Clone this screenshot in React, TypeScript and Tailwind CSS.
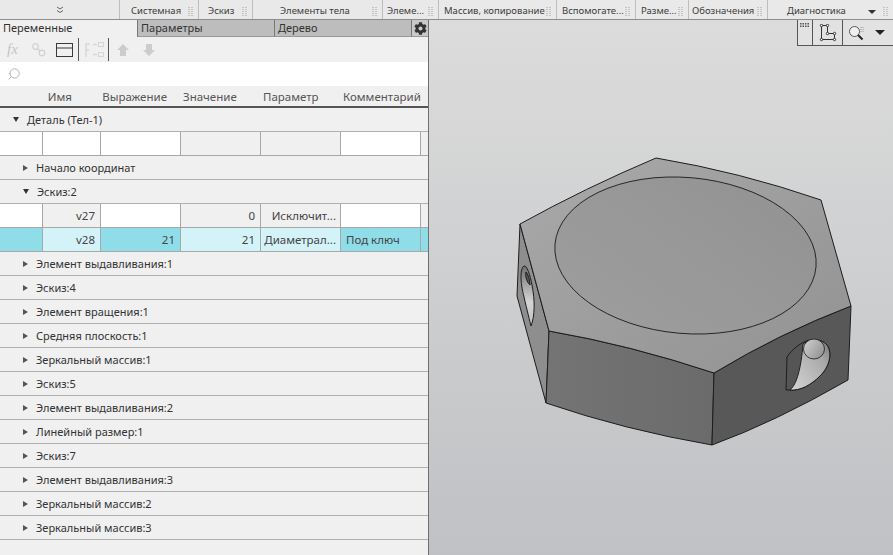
import { Search } from "lucide-react";
import { FaCog } from "react-icons/fa";

function Grip() {
  return (
    <svg width="6" height="10" viewBox="0 0 6 10" className="shrink-0">
      {[0, 2, 4, 6, 8].map((y) => (
        <g key={y}>
          <rect x="0.5" y={y} width="1" height="1" fill="#a0a0a0" />
          <rect x="3.5" y={y} width="1" height="1" fill="#a0a0a0" />
        </g>
      ))}
    </svg>
  );
}

const sections = [
  { label: "Системная", w: "w-[79px]", pl: "pl-[11px]" },
  { label: "Эскиз", w: "w-[54px]", pl: "pl-[9px]" },
  { label: "Элементы тела", w: "w-[130px]", pl: "pl-[27px]" },
  { label: "Элеме...", w: "w-[56px]", pl: "pl-[4px]" },
  { label: "Массив, копирование", w: "w-[118px]", pl: "pl-[5px]" },
  { label: "Вспомогате...", w: "w-[79px]", pl: "pl-[5px]" },
  { label: "Разме...", w: "w-[53px]", pl: "pl-[5px]" },
  { label: "Обозначения", w: "w-[79px]", pl: "pl-[3px]" },
];

function TopBar() {
  return (
    <div className="flex h-[20px] items-center bg-[#e9e9e9] border-b border-[#8e8e8e] text-[9.5px] text-[#3c3c3c] shrink-0">
      <div className="w-[120px] h-full flex items-center justify-center border-r border-[#bdbdbd]">
        <svg width="8" height="8" viewBox="0 0 8 8" fill="none" stroke="#666" strokeWidth="1">
          <path d="M1 1 L4 3 L7 1 M1 4.5 L4 6.5 L7 4.5" />
        </svg>
      </div>
      {sections.map((s) => (
        <div key={s.label} className={`${s.w} ${s.pl} h-full flex items-center justify-between pt-[4px] pr-[4px] border-r border-[#bdbdbd] whitespace-nowrap`}>
          <span>{s.label}</span>
          <Grip />
        </div>
      ))}
      <div className="flex-1 h-full flex items-center pt-[4px] pl-[19px] pr-[4px] justify-between">
        <span>Диагностика</span>
        <span className="flex items-center gap-[7px]">
          <span className="w-0 h-0 border-x-[4px] border-x-transparent border-t-[4px] border-t-[#333]" />
          <Grip />
        </span>
      </div>
    </div>
  );
}

function Tabs() {
  return (
    <div className="flex h-[17px] text-[11px] leading-[16px] text-[#333] shrink-0">
      <div className="w-[137px] pl-[3px] bg-[#f0f0f0]">Переменные</div>
      <div className="w-[137px] pl-[3px] bg-[#bdbdbd] border-l border-[#777] border-b border-b-[#999]">Параметры</div>
      <div className="w-[137px] pl-[3px] bg-[#bdbdbd] border-l border-[#777] border-b border-b-[#999]">Дерево</div>
      <div className="flex-1 bg-[#c9c9c9] border-l border-[#777] border-b border-b-[#999] flex items-center justify-center">
        <FaCog size={13} color="#333" />
      </div>
    </div>
  );
}

function IconBar() {
  return (
    <div className="flex items-center h-[25px] bg-[#f0f0f0] shrink-0 relative">
      <span className="w-[20px] ml-[7px] text-[15px] italic text-[#c4c4c4] leading-none [font-family:'Liberation_Serif',serif]">fx</span>
      <svg width="16" height="16" viewBox="0 0 16 16" fill="none" stroke="#d0d0d0" strokeWidth="1.2" className="ml-[4px]">
        <circle cx="4.5" cy="4.5" r="2.8" />
        <circle cx="11" cy="11" r="2.8" />
        <path d="M6.5 6.5 L9 9" />
      </svg>
      <svg width="17" height="14" viewBox="0 0 17 14" fill="none" stroke="#3a3a3a" strokeWidth="1" className="ml-[9px]">
        <rect x="0.5" y="0.5" width="16" height="13" />
        <path d="M0.5 5 H16.5" />
      </svg>
      <div className="w-px h-[23px] bg-[#555] ml-[5px]" />
      <svg width="22" height="18" viewBox="0 0 22 18" fill="none" stroke="#d6d6d6" strokeWidth="1" className="ml-[5px]">
        <rect x="14.5" y="1.5" width="5" height="4" />
        <rect x="14.5" y="11.5" width="5" height="4" />
        <path d="M1.5 3 H6 M2 3 V16 M2 9 H5 M9 3.5 H13 M9 13.5 H13" strokeWidth="1.4" />
      </svg>
      <div className="w-px h-[23px] bg-[#555] ml-[2px]" />
      <svg width="14" height="14" viewBox="0 0 14 14" fill="#cccccc" className="ml-[7px]">
        <path d="M7 1 L13 7 H10 V13 H4 V7 H1 Z" />
      </svg>
      <svg width="14" height="14" viewBox="0 0 14 14" fill="#cccccc" className="ml-[12px]">
        <path d="M7 13 L13 7 H10 V1 H4 V7 H1 Z" />
      </svg>
    </div>
  );
}

function SearchBar() {
  return (
    <div className="h-[24px] bg-white flex items-center pl-[7px] shrink-0">
      <Search size={14} color="#aaa" strokeWidth={1.5} className="-scale-x-100" />
    </div>
  );
}

function Header() {
  const cols = [
    ["w-[100px] pr-[28px] text-right", "Имя"],
    ["w-[67px] text-right", "Выражение"],
    ["w-[76px] pl-[16px] text-left", "Значение"],
    ["w-[80px] pl-[20px] text-left", "Параметр"],
    ["w-[100px] pl-[20px] text-left", "Комментарий"],
  ];
  return (
    <div className="h-[22px] flex items-center pt-[2px] border-b-2 border-[#555] text-[11.5px] text-[#555] bg-[#f0f0f0] shrink-0 whitespace-nowrap">
      {cols.map(([c, t]) => (
        <div key={t} className={c}>{t}</div>
      ))}
    </div>
  );
}

function TreeRow({ label, open, indent = "pl-[23px]" }: { label: string; open?: boolean; indent?: string }) {
  return (
    <div className={`h-[24px] flex items-center ${indent} bg-[#f0f0f0] border-b border-[#b0b0b0] text-[11px] text-[#333] shrink-0`}>
      {open ? (
        <span className="w-0 h-0 border-x-[3px] border-x-transparent border-t-[5px] border-t-[#333] mr-[8px]" />
      ) : (
        <span className="w-0 h-0 border-y-[3px] border-y-transparent border-l-[5px] border-l-[#555] mr-[8px]" />
      )}
      <span className="pt-[2px]">{label}</span>
    </div>
  );
}

type Cell = { t?: string; bg: string; cls?: string };
function GridRow({ cells }: { cells: Cell[] }) {
  const ws = ["w-[43px]", "w-[58px]", "w-[80px]", "w-[80px]", "w-[80px]", "w-[80px]", "flex-1"];
  return (
    <div className="h-[24px] flex border-b border-[#a8a8a8] text-[11.5px] text-[#444] shrink-0">
      {cells.map((c, i) => (
        <div key={i} className={`${ws[i]} ${c.bg} ${c.cls ?? ""} ${i < 6 ? "border-r border-[#a8a8a8]" : ""} h-full flex items-center pt-[1px] whitespace-nowrap overflow-hidden`}>
          {c.t}
        </div>
      ))}
    </div>
  );
}

const tail = [
  "Элемент выдавливания:1",
  "Эскиз:4",
  "Элемент вращения:1",
  "Средняя плоскость:1",
  "Зеркальный массив:1",
  "Эскиз:5",
  "Элемент выдавливания:2",
  "Линейный размер:1",
  "Эскиз:7",
  "Элемент выдавливания:3",
  "Зеркальный массив:2",
  "Зеркальный массив:3",
];

function Panel() {
  return (
    <div className="w-[429px] shrink-0 h-full bg-[#f0f0f0] border-r border-[#6e6e6e] flex flex-col overflow-hidden">
      <Tabs />
      <IconBar />
      <SearchBar />
      <Header />
      <TreeRow label="Деталь (Тел-1)" open indent="pl-[13px]" />
      <GridRow cells={[{ bg: "bg-white" }, { bg: "bg-white" }, { bg: "bg-white" }, { bg: "bg-[#f0f0f0]" }, { bg: "bg-[#f0f0f0]" }, { bg: "bg-white" }, { bg: "bg-[#f0f0f0]" }]} />
      <TreeRow label="Начало координат" />
      <TreeRow label="Эскиз:2" open />
      <GridRow
        cells={[
          { bg: "bg-white" },
          { bg: "bg-[#f0f0f0]", t: "v27", cls: "justify-end pr-[5px]" },
          { bg: "bg-white" },
          { bg: "bg-[#f0f0f0]", t: "0", cls: "justify-end pr-[5px]" },
          { bg: "bg-[#f0f0f0]", t: "Исключит...", cls: "justify-end pr-[4px]" },
          { bg: "bg-white" },
          { bg: "bg-[#f0f0f0]" },
        ]}
      />
      <GridRow
        cells={[
          { bg: "bg-[#8fdde8]" },
          { bg: "bg-[#d4f3f9]", t: "v28", cls: "justify-end pr-[5px]" },
          { bg: "bg-[#8fdde8]", t: "21", cls: "justify-end pr-[5px]" },
          { bg: "bg-[#d4f3f9]", t: "21", cls: "justify-end pr-[5px]" },
          { bg: "bg-[#d4f3f9]", t: "Диаметрал...", cls: "justify-end pr-[4px]" },
          { bg: "bg-[#8fdde8]", t: "Под ключ", cls: "pl-[5px]" },
          { bg: "bg-[#8fdde8]" },
        ]}
      />
      {tail.map((t, i) => (
        <TreeRow key={i} label={t} />
      ))}
    </div>
  );
}

function Part() {
  return (
    <svg viewBox="0 0 464 535" width="464" height="535" className="block">
      <defs>
        <linearGradient id="top" x1="0" y1="0" x2="1" y2="1">
          <stop offset="0" stopColor="#a9a9a9" />
          <stop offset="1" stopColor="#929292" />
        </linearGradient>
        <linearGradient id="disc" x1="0" y1="1" x2="1" y2="0">
          <stop offset="0" stopColor="#9e9e9e" />
          <stop offset="1" stopColor="#929292" />
        </linearGradient>
        <linearGradient id="front" x1="0" y1="0" x2="1" y2="0">
          <stop offset="0" stopColor="#747474" />
          <stop offset="1" stopColor="#6b6b6b" />
        </linearGradient>
        <linearGradient id="crescent" x1="0" y1="1" x2="1" y2="0">
          <stop offset="0" stopColor="#d5d5d5" />
          <stop offset="0.7" stopColor="#aaa" />
          <stop offset="1" stopColor="#777" />
        </linearGradient>
        <linearGradient id="bore" x1="0" y1="0" x2="1" y2="0.6">
          <stop offset="0" stopColor="#d2d2d2" />
          <stop offset="1" stopColor="#969696" />
        </linearGradient>
        <linearGradient id="lhole" x1="0" y1="0" x2="0" y2="1">
          <stop offset="0" stopColor="#6e6e6e" />
          <stop offset="0.6" stopColor="#d4d4d4" />
          <stop offset="1" stopColor="#c0c0c0" />
        </linearGradient>
      </defs>
      <g transform="translate(-429 -20)" stroke="#1d1d1d" strokeWidth="1" strokeLinejoin="round">
        <path d="M520 224 L549 331 L546 403 L517 296 Z" fill="#8e8e8e" />
        <path d="M549 331 Q630 345 714 373 L712 445 Q625 430 546 403 Z" fill="url(#front)" />
        <path d="M714 373 Q780 333 851 306 L848 380 Q775 422 712 445 Z" fill="#585858" />
        <path d="M520 224 Q585 188 656 158 Q740 172 821 200 L851 306 Q780 333 714 373 Q630 345 549 331 Z" fill="url(#top)" />
        <ellipse cx="685.5" cy="255.5" rx="131" ry="78" transform="rotate(5 685.5 255.5)" fill="url(#disc)" strokeWidth="0.9" />
        {/* left hole */}
        <path d="M524 266 C520 268 520 282 524 297 C527 310 530 322 531 326 C535 316 535 300 532 285 C530 275 527 265 524 266 Z" fill="url(#lhole)" />
        <path d="M526 272 C525 277 527 282 530 285 C530 280 528 274 526 272 Z" fill="#555" />
        {/* right hole */}
        <path d="M787 357 C792 349 800 344 804 342 C811 338 822 339 827 345 C833 354 829 367 820 376 C811 385 800 391 790 390 L786 390 Z" fill="#555" />
        <path d="M803 344 C811 338 822 339 827 345 C833 354 829 367 820 376 C811 385 800 391 790 390 C797 384 801 368 803 344 Z" fill="url(#crescent)" />
        <ellipse cx="814" cy="349" rx="10.5" ry="10" fill="url(#bore)" strokeWidth="0.8" />
      </g>
    </svg>
  );
}

function Viewport() {
  return (
    <div className="flex-1 h-full relative bg-gradient-to-b from-[#dcdcdc] to-[#bfc1c4] overflow-hidden">
      <Part />
      <div className="absolute top-0 right-0 w-[96px] h-[26px] flex border-l border-b border-[#555] bg-[#e2e2e2]">
        <div className="w-[15px] border-r border-[#555] flex justify-center pt-[3px]">
          <svg width="10" height="4" viewBox="0 0 10 4" fill="#555">
            {[0, 2.5, 5, 7.5].map((x) => (
              <g key={x}>
                <rect x={x} y="0" width="1.5" height="1.5" />
                <rect x={x} y="2.5" width="1.5" height="1.5" />
              </g>
            ))}
          </svg>
        </div>
        <div className="w-[30px] border-r border-[#555] flex items-center justify-center">
          <svg width="18" height="18" viewBox="0 0 18 18" fill="none" stroke="#333" strokeWidth="1">
            <path d="M2.5 1.5 H8.5 V9.5 H15.5 V15.5 H2.5 Z" />
            <circle cx="2.5" cy="1.5" r="1.2" fill="#fff" />
            <circle cx="8.5" cy="1.5" r="1.2" fill="#fff" />
            <circle cx="8.5" cy="9.5" r="1.2" fill="#fff" />
            <circle cx="15.5" cy="9.5" r="1.2" fill="#fff" />
            <circle cx="15.5" cy="15.5" r="1.2" fill="#fff" />
            <circle cx="2.5" cy="15.5" r="1.2" fill="#fff" />
          </svg>
        </div>
        <div className="flex-1 flex items-center pl-[5px]">
          <svg width="16" height="16" viewBox="0 0 16 16" fill="none">
            <circle cx="6.5" cy="6.5" r="5" stroke="#555" strokeWidth="1" fill="#f0f0f0" />
            <path d="M10 10 L14.5 14.5" stroke="#222" strokeWidth="2" />
            <path d="M13 2 V8 M15 2 V8" stroke="#999" strokeWidth="1" strokeDasharray="1 1" />
          </svg>
          <span className="ml-[11px] w-0 h-0 border-x-[5px] border-x-transparent border-t-[5px] border-t-[#222]" />
        </div>
      </div>
    </div>
  );
}

export default function App() {
  return (
    <div className="w-[893px] h-[555px] flex flex-col overflow-hidden bg-[#dcdcdc] [font-family:'Noto_Sans',sans-serif]">
      <TopBar />
      <div className="flex flex-1 min-h-0">
        <Panel />
        <Viewport />
      </div>
    </div>
  );
}
